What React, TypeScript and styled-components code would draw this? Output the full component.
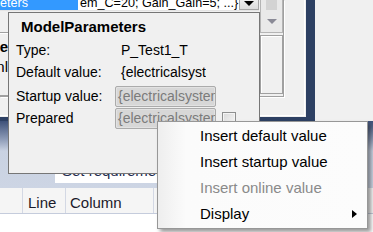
import React from 'react';
import styled, { createGlobalStyle } from 'styled-components';

const GlobalStyle = createGlobalStyle`
  *, *::before, *::after { box-sizing: border-box; }
  html, body { margin: 0; padding: 0; }
  body {
    font-family: "Liberation Sans", Arial, sans-serif;
    background: #f0f0f0;
    color: #000;
  }
`;

const Screen = styled.div`
  position: relative;
  width: 373px;
  height: 232px;
  overflow: hidden;
  background: #f0f0f0;
  display: flex;
  flex-direction: column;
`;

// ---- background: property grid framed in navy ----

const TopArea = styled.div`
  display: flex;
  height: 121px;
  flex-shrink: 0;
`;

const NavyFrame = styled.div`
  width: 315px;
  height: 121px;
  border-right: 9px solid #2d4063;
  border-bottom: 4px solid #2d4063;
  background: #f0f0f0;
`;

const InsetPanel = styled.div`
  width: 305px;
  height: 116px;
  border-right: 1px solid #ffffff;
  border-bottom: 1px solid #ffffff;
`;

const GridFrame = styled.div`
  display: flex;
  width: 284px;
  height: 97px;
  border-right: 1px solid #a0a0a0;
  border-bottom: 1px solid #a0a0a0;
  box-shadow: 1px 1px 0 #ffffff;
`;

const GridBody = styled.div`
  width: 259px;
  display: flex;
  flex-direction: column;
  overflow: hidden;
`;

const TopRow = styled.div`
  display: flex;
  height: 15px;
  margin-top: -4px;
  font-size: 12.6px;
  line-height: 15px;
  white-space: nowrap;
  border-bottom: 1px solid #e4e4e4;
`;

const SelectedCell = styled.div`
  width: 78px;
  background: #3399ff;
  color: #ffffff;
  overflow: hidden;

  span {
    display: inline-block;
    margin-left: -37px;
  }
`;

const ValueCell = styled.div`
  width: 161px;
  background: #ffffff;
  padding-left: 2px;
  overflow: hidden;
`;

const DropButton = styled.div`
  width: 20px;
  display: flex;
  justify-content: center;
  padding-top: 4px;
  background: linear-gradient(#f3f3f3, #dddddd);
  border: 1px solid #a6a6a6;
`;

const DownTriangle = styled.span<{ $color: string; $size: number }>`
  width: 0;
  height: 0;
  border-left: ${p => p.$size}px solid transparent;
  border-right: ${p => p.$size}px solid transparent;
  border-top: ${p => p.$size}px solid ${p => p.$color};
`;

const DetailArea = styled.div`
  flex: 1;
  display: flex;
  flex-direction: column;
  padding-top: 21px;
`;

const SepLine = styled.div<{ $gap: number }>`
  margin-top: ${p => p.$gap}px;
  height: 2px;
  border-top: 1px solid #a0a0a0;
  border-bottom: 1px solid #ffffff;
`;

const ClippedLabel = styled.div<{ $bold?: boolean; $gap: number }>`
  display: flex;
  justify-content: flex-end;
  width: 8px;
  margin-top: ${p => p.$gap}px;
  overflow: hidden;
  white-space: nowrap;
  font-size: 15px;
  line-height: 18px;
  font-weight: ${p => (p.$bold ? 700 : 400)};
`;

const ScrollColumn = styled.div`
  width: 24px;
  padding-left: 1px;
  display: flex;
  flex-direction: column;
`;

const ScrollTrack = styled.div`
  height: 33px;
  display: flex;
  flex-direction: column;
  align-items: center;
  background: #e9e9e9;
  border: 1px solid #b4b4b4;
  border-top: none;
`;

const ScrollThumb = styled.div`
  width: 11px;
  height: 10px;
  background: #d3d3d3;
`;

const ScrollArrow = styled.div`
  margin-top: 9px;
  display: flex;
`;

const ScrollBox = styled.div`
  margin-top: 2px;
  height: 59px;
  border: 1px solid #a0a0a0;
  box-shadow: inset 1px 1px 0 #ffffff;
`;

const RightFill = styled.div`
  flex: 1;
  background: #f0f0f0;
`;

// ---- background: lower tab strip and error list header ----

const TabStrip = styled.div`
  height: 67px;
  flex-shrink: 0;
  padding: 39px 0 0 55px;
  background: linear-gradient(#3e5179 0px, #8c9ab6 18px, #c9d2e2 30px, #cdd5e4 100%);
`;

const WhiteTab = styled.div`
  width: 150px;
  height: 23px;
  padding-left: 7px;
  background: #ffffff;
  color: #1b2a4e;
  font-size: 15px;
  line-height: 21px;
  white-space: nowrap;
  overflow: hidden;
`;

const HeaderRow = styled.div`
  display: flex;
  height: 26px;
  flex-shrink: 0;
  background: #f5f5f5;
  border-bottom: 1px solid #c5ccdc;
`;

const HeaderCell = styled.div<{ $width: number; $pad: number }>`
  width: ${p => p.$width}px;
  padding: 4px 0 0 ${p => p.$pad}px;
  border-right: 1px solid #d3d8e4;
  font-size: 15px;
  line-height: 22px;
  color: #1a1a2a;
`;

const WhiteFill = styled.div`
  flex: 1;
  background: #ffffff;
`;

// ---- tooltip ----

const Tooltip = styled.div`
  position: absolute;
  left: 8px;
  top: 12px;
  width: 252px;
  height: 162px;
  padding: 5px 0 0 7px;
  background: #f0f0f0;
  border: 1px solid #767676;
`;

const TooltipTitle = styled.div`
  margin-left: 5px;
  font-size: 15px;
  font-weight: 700;
  line-height: 18px;
`;

const ParamGrid = styled.div`
  margin-top: 3px;
  display: grid;
  grid-template-columns: 99px 1fr;
  font-size: 14px;
`;

const ParamLabel = styled.div<{ $height: number }>`
  height: ${p => p.$height}px;
  line-height: 22px;
  white-space: nowrap;
`;

const ParamValue = styled.div<{ $height: number }>`
  height: ${p => p.$height}px;
  display: flex;
  align-items: flex-start;
`;

const PlainValue = styled.div`
  width: 91px;
  padding-left: 6px;
  line-height: 22px;
  white-space: nowrap;
  overflow: hidden;
`;

const ReadOnlyField = styled.div`
  width: 101px;
  height: 21px;
  margin-top: 1px;
  padding-left: 2px;
  border: 1px solid #ababab;
  border-radius: 2px;
  background: #d7d7d7;
  box-shadow: inset 0 0 0 1px #e2e2e2;
  color: #7b7b7b;
  line-height: 19px;
  white-space: nowrap;
  overflow: hidden;
`;

const CheckBox = styled.div`
  width: 14px;
  height: 13px;
  margin: 5px 0 0 6px;
  border: 1px solid #8e8f8f;
  background: linear-gradient(135deg, #d8d8d8, #f7f7f7);
  box-shadow: inset 0 0 0 1px #f4f4f4;
`;

// ---- context menu ----

const ContextMenu = styled.div`
  position: absolute;
  left: 157px;
  top: 121px;
  width: 211px;
  height: 108px;
  padding: 1px 2px;
  border: 1px solid #979797;
  background: linear-gradient(to right, #eeeeee 0px, #fbfbfb 28px, #fcfcfc 100%);
  box-shadow: 3px 3px 4px rgba(0, 0, 0, 0.4);
`;

const MenuItem = styled.div<{ $disabled?: boolean }>`
  display: flex;
  align-items: center;
  justify-content: space-between;
  height: 26px;
  padding: 0 8px 0 40px;
  font-size: 15px;
  line-height: 26px;
  color: ${p => (p.$disabled ? '#8a8a8a' : '#000000')};
  white-space: nowrap;
`;

const SubmenuArrow = styled.span`
  width: 0;
  height: 0;
  border-top: 4px solid transparent;
  border-bottom: 4px solid transparent;
  border-left: 5px solid #000;
`;

const menuItems = [
  { label: 'Insert default value' },
  { label: 'Insert startup value' },
  { label: 'Insert online value', disabled: true },
  { label: 'Display', submenu: true },
];

export default function App() {
  return (
    <>
      <GlobalStyle />
      <Screen>
        <TopArea>
          <NavyFrame>
            <InsetPanel>
              <GridFrame>
                <GridBody>
                  <TopRow>
                    <SelectedCell>
                      <span>Parameters</span>
                    </SelectedCell>
                    <ValueCell>{'em_C=20; Gain_Gain=5; ...}'}</ValueCell>
                    <DropButton>
                      <DownTriangle $color="#000" $size={5} />
                    </DropButton>
                  </TopRow>
                  <DetailArea>
                    <SepLine $gap={0} />
                    <ClippedLabel $bold $gap={4}>Name</ClippedLabel>
                    <ClippedLabel $gap={2}>Onl</ClippedLabel>
                    <SepLine $gap={19} />
                  </DetailArea>
                </GridBody>
                <ScrollColumn>
                  <ScrollTrack>
                    <ScrollThumb />
                    <ScrollArrow>
                      <DownTriangle $color="#8a8a96" $size={5} />
                    </ScrollArrow>
                  </ScrollTrack>
                  <ScrollBox />
                </ScrollColumn>
              </GridFrame>
            </InsetPanel>
          </NavyFrame>
          <RightFill />
        </TopArea>

        <TabStrip>
          <WhiteTab>Set requirements</WhiteTab>
        </TabStrip>
        <HeaderRow>
          <HeaderCell $width={23} $pad={0} />
          <HeaderCell $width={43} $pad={5}>Line</HeaderCell>
          <HeaderCell $width={88} $pad={4}>Column</HeaderCell>
        </HeaderRow>
        <WhiteFill />

        <Tooltip>
          <TooltipTitle>ModelParameters</TooltipTitle>
          <ParamGrid>
            <ParamLabel $height={22}>Type:</ParamLabel>
            <ParamValue $height={22}>
              <PlainValue>P_Test1_T</PlainValue>
            </ParamValue>
            <ParamLabel $height={24}>Default value:</ParamLabel>
            <ParamValue $height={24}>
              <PlainValue>{'{electricalsystem}'}</PlainValue>
            </ParamValue>
            <ParamLabel $height={22}>Startup value:</ParamLabel>
            <ParamValue $height={22}>
              <ReadOnlyField>{'{electricalsystem}'}</ReadOnlyField>
            </ParamValue>
            <ParamLabel $height={22}>Prepared</ParamLabel>
            <ParamValue $height={22}>
              <ReadOnlyField>{'{electricalsystem}'}</ReadOnlyField>
              <CheckBox />
            </ParamValue>
          </ParamGrid>
        </Tooltip>

        <ContextMenu>
          {menuItems.map(item => (
            <MenuItem key={item.label} $disabled={item.disabled}>
              <span>{item.label}</span>
              {item.submenu && <SubmenuArrow />}
            </MenuItem>
          ))}
        </ContextMenu>
      </Screen>
    </>
  );
}
